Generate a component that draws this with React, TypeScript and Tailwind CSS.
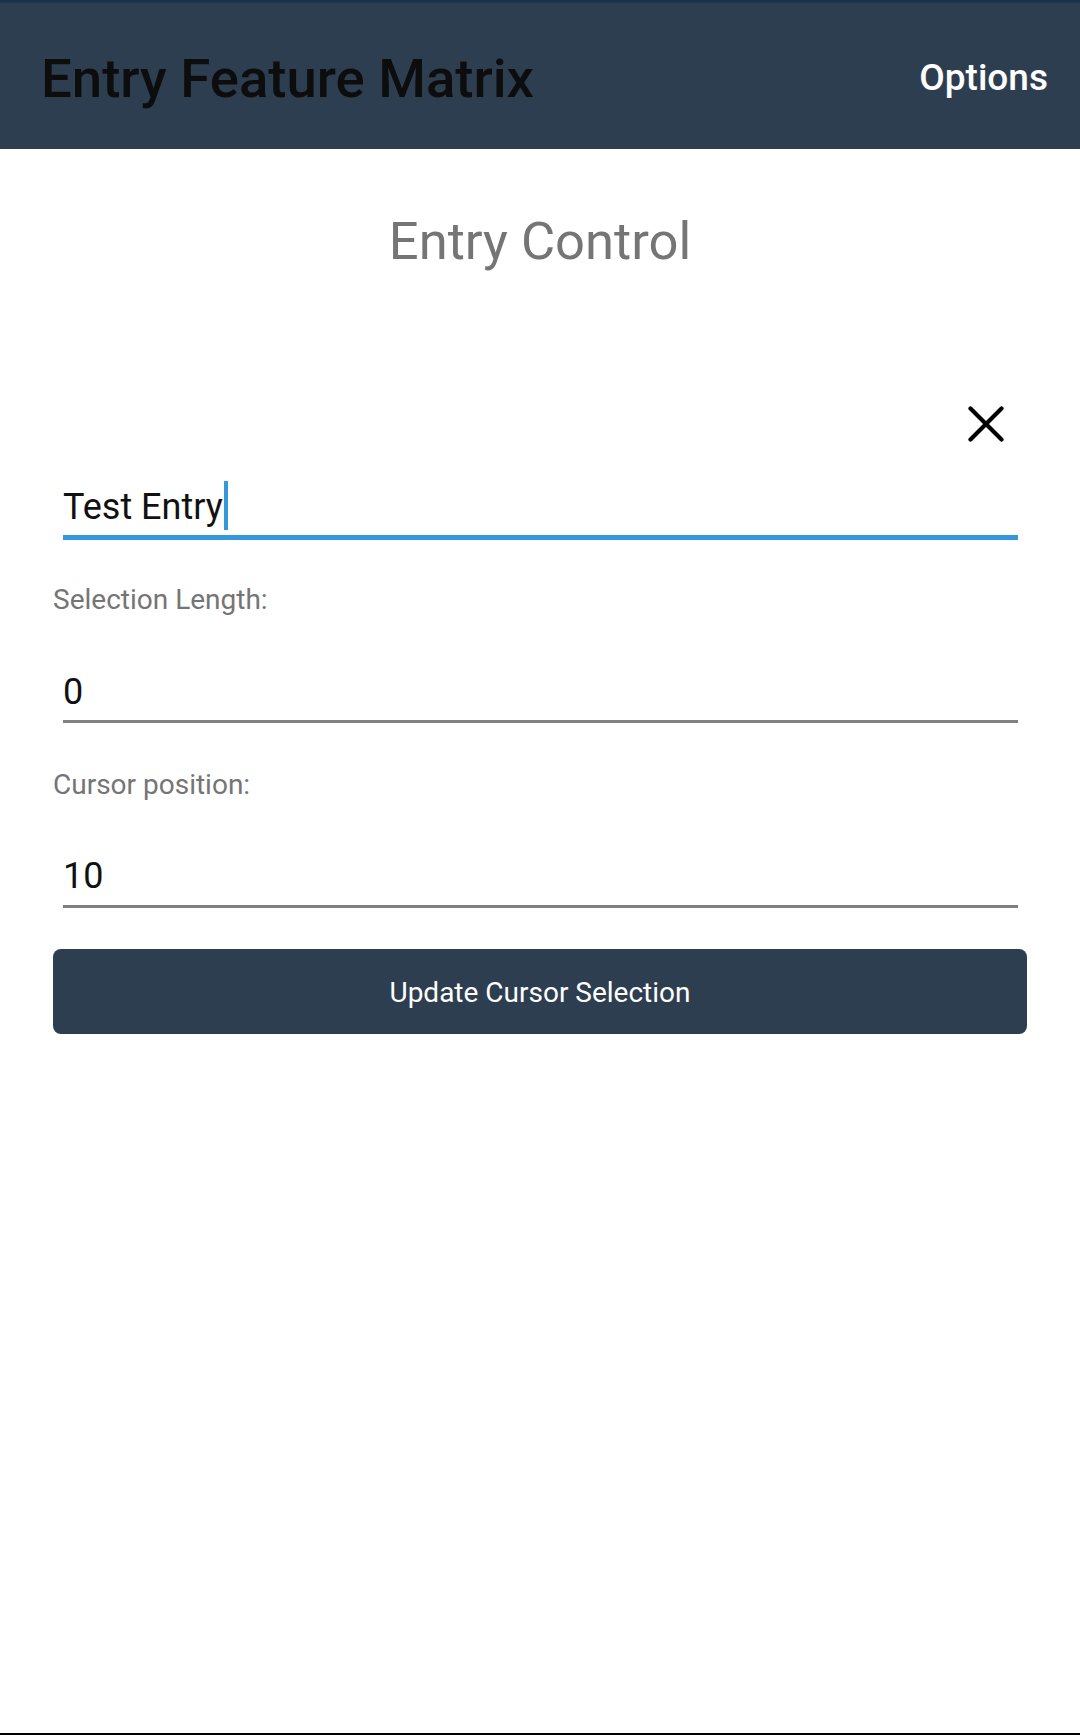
import React from "react";

function ClearIcon() {
  return (
    <svg width="36" height="36" viewBox="0 0 36 36" fill="none">
      <path d="M2.5 2.5 L33.5 33.5 M33.5 2.5 L2.5 33.5" stroke="#000" strokeWidth="4.2" strokeLinecap="round" />
    </svg>
  );
}

export default function App() {
  return (
    <div className="w-[1080px] h-[1735px] bg-white flex flex-col border-b-2 border-black font-['Roboto','Liberation_Sans',sans-serif]">
      <header className="h-[149px] shrink-0 bg-[#2d3e50] border-t-[3px] border-[#1c3349] flex justify-between items-start pl-[41px] pr-[32px]">
        <div className="mt-[47px] text-[54.5px] leading-[56px] font-medium text-[#0d0d0d] whitespace-nowrap">
          Entry Feature Matrix
        </div>
        <div className="mt-[55px] text-[37px] leading-[40px] font-medium text-white whitespace-nowrap">
          Options
        </div>
      </header>

      <main className="flex flex-col px-[53px]">
        <div className="mt-[66px] text-[52.5px] leading-[52px] text-center text-[#757575]">Entry Control</div>

        <div className="mt-[139px] flex justify-end mr-[23px] h-[36px]">
          <ClearIcon />
        </div>

        <div className="mt-[43px] ml-[10px] mr-[9px] pb-[6px] border-b-[5px] border-[#3498db]">
          <div className="text-[36px] leading-[44px] text-[#111]">
            <span className="relative">
              Test Entry
              <span className="absolute left-full ml-[1px] top-[-5px] w-[4px] h-[49px] bg-[#3498db]" />
            </span>
          </div>
        </div>

        <div className="mt-[44px] text-[28px] leading-[32px] text-[#757575]">Selection Length:</div>

        <div className="mt-[54px] ml-[10px] mr-[9px] pb-[6px] border-b-[3px] border-[#808080]">
          <div className="text-[36px] leading-[44px] text-[#111]">0</div>
        </div>

        <div className="mt-[46px] text-[28px] leading-[32px] text-[#757575]">Cursor position:</div>

        <div className="mt-[53px] ml-[10px] mr-[9px] pb-[7px] border-b-[3px] border-[#808080]">
          <div className="text-[36px] leading-[44px] text-[#111]">10</div>
        </div>

        <button className="mt-[41px] h-[85px] rounded-[8px] bg-[#2d3e50] text-white text-[28px] leading-[32px] flex items-center justify-center pt-[3px]">
          Update Cursor Selection
        </button>
      </main>
    </div>
  );
}
